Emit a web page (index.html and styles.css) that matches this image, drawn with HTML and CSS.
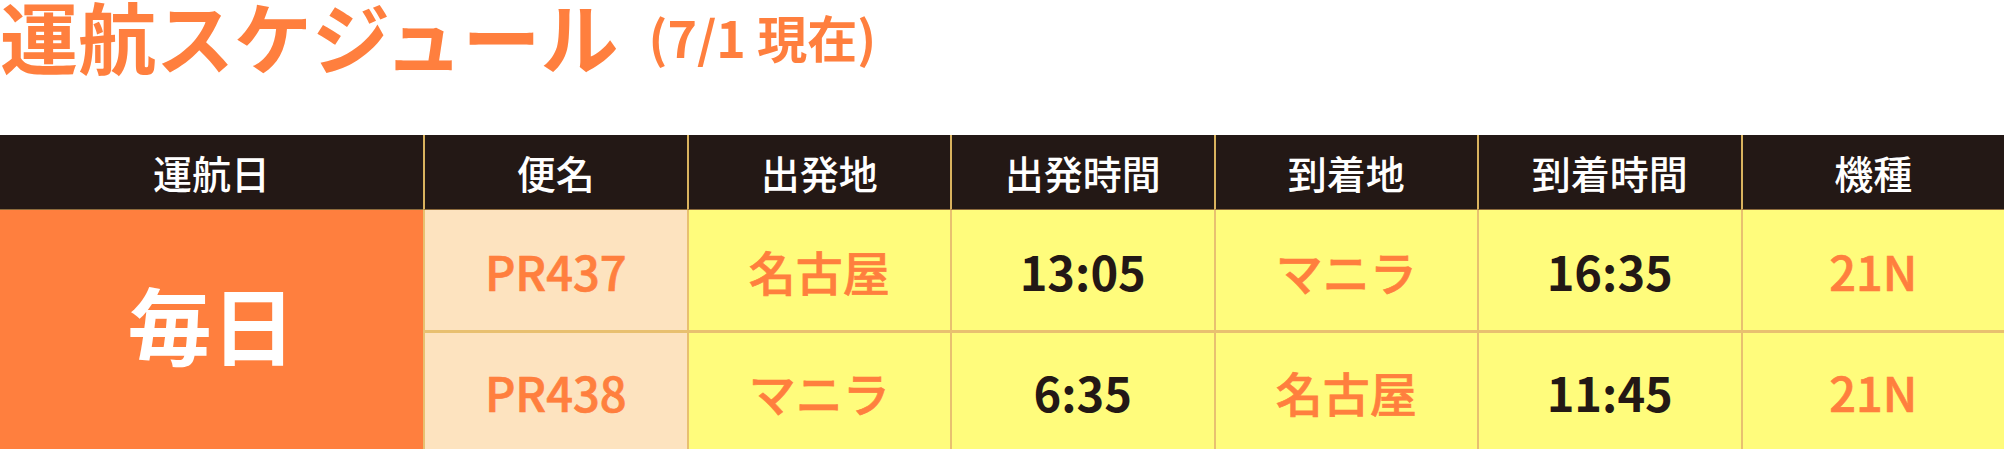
FILE: index.html
```html
<!DOCTYPE html>
<html lang="ja">
<head>
<meta charset="utf-8">
<title>運航スケジュール</title>
<link rel="stylesheet" href="styles.css">
</head>
<body>
<div class="page">
  <h1 class="heading">
    <span class="heading-main">運航スケジュール</span>
    <span class="heading-sub">(7/1 現在)</span>
  </h1>
  <div class="schedule">
    <div class="th">運航日</div>
    <div class="th">便名</div>
    <div class="th">出発地</div>
    <div class="th">出発時間</div>
    <div class="th">到着地</div>
    <div class="th">到着時間</div>
    <div class="th">機種</div>

    <div class="td day">毎日</div>
    <div class="td flight">PR437</div>
    <div class="td place">名古屋</div>
    <div class="td time">13:05</div>
    <div class="td place">マニラ</div>
    <div class="td time">16:35</div>
    <div class="td place">21N</div>

    <div class="td flight row2">PR438</div>
    <div class="td place row2">マニラ</div>
    <div class="td time row2">6:35</div>
    <div class="td place row2">名古屋</div>
    <div class="td time row2">11:45</div>
    <div class="td place row2">21N</div>
  </div>
</div>
</body>
</html>
```

FILE: styles.css
```css
html, body {
  margin: 0;
  padding: 0;
  background: #ffffff;
}

body {
  font-family: "Noto Sans CJK JP", "Noto Sans", sans-serif;
  overflow: hidden;
}

.page {
  width: 2004px;
}

.heading {
  display: flex;
  align-items: center;
  gap: 30px;
  margin: 0 0 64px 0;
  height: 71px;
  color: #ff7f3e;
  font-weight: 700;
}

.heading-main {
  font-size: 78px;
  line-height: 0.86;
}

.heading-sub {
  font-size: 50px;
  line-height: 1;
}

.schedule {
  display: grid;
  grid-template-columns: 423px repeat(6, 1fr);
  grid-template-rows: 75px 120px 120px;
}

.th {
  background: #231815;
  color: #ffffff;
  font-size: 39px;
  font-weight: 500;
  display: flex;
  align-items: center;
  justify-content: center;
  border-left: 2px solid #d9b25e;
  border-bottom: 1px solid #8c6a3c;
}

.th:first-child {
  border-left: none;
}

.td {
  display: flex;
  align-items: center;
  justify-content: center;
  font-size: 47px;
  font-weight: 500;
  background: #fffc7c;
  border-left: 2px solid #e8c070;
  color: #ff7f3e;
  -webkit-text-stroke: 0.7px currentColor;
}

.td.row2 {
  border-top: 3px solid #e8c070;
}

.td.day {
  grid-row: 2 / span 2;
  background: #ff7f3e;
  color: #ffffff;
  font-size: 84px;
  font-weight: 700;
  border-left: none;
  padding-bottom: 16px;
  -webkit-text-stroke: 0;
}

.td.flight {
  background: #fde3bf;
}

.td.time {
  color: #231815;
  font-weight: 700;
  -webkit-text-stroke: 0;
}
```
